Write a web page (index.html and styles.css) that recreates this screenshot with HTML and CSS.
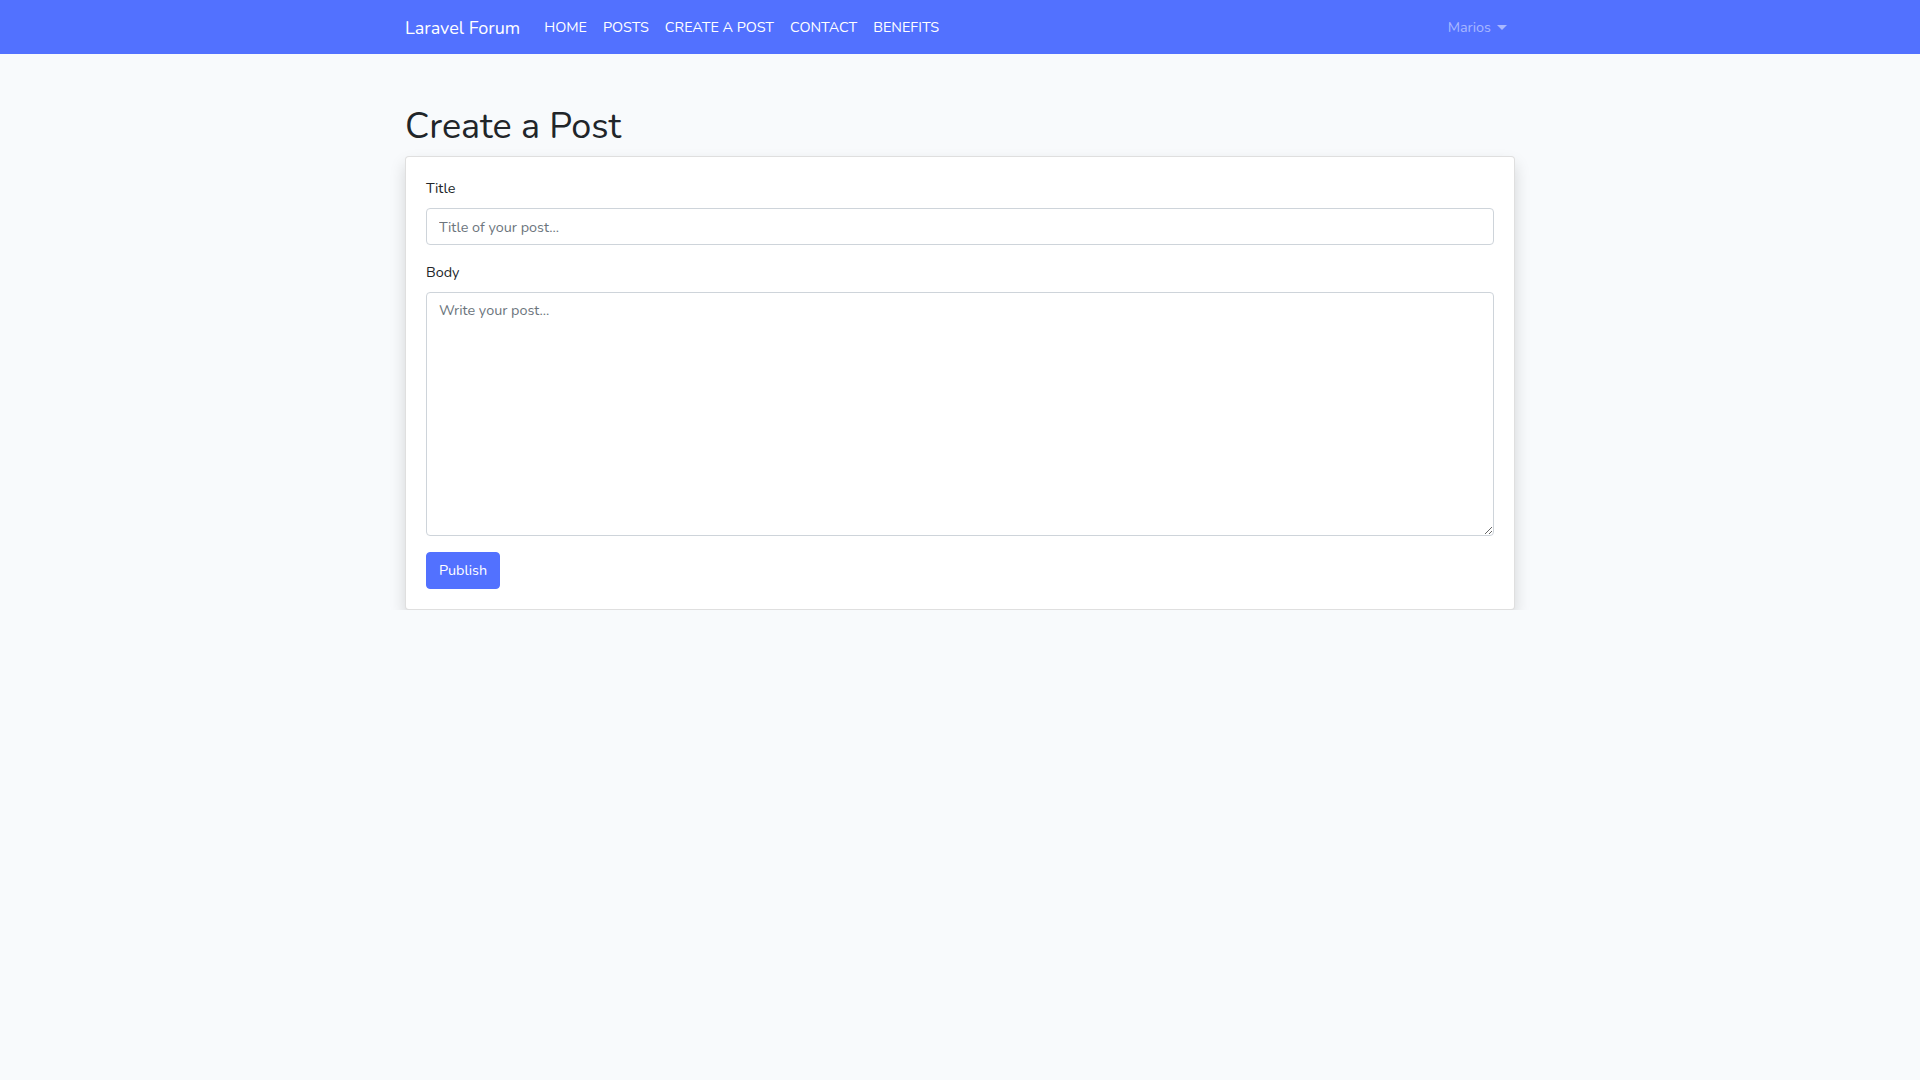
FILE: index.html
```html
<!DOCTYPE html>
<html lang="en">
<head>
<meta charset="utf-8">
<title>Laravel Forum</title>
<link rel="stylesheet" href="styles.css">
</head>
<body>
<nav class="navbar">
  <div class="nav-container">
    <a class="brand" href="#">Laravel Forum</a>
    <ul class="nav-links">
      <li><a href="#">HOME</a></li>
      <li><a href="#">POSTS</a></li>
      <li><a href="#">CREATE A POST</a></li>
      <li><a href="#">CONTACT</a></li>
      <li><a href="#">BENEFITS</a></li>
    </ul>
    <div class="user">Marios <span class="caret"></span></div>
  </div>
</nav>
<main class="main">
  <div class="container">
    <h1 class="page-title">Create a Post</h1>
    <div class="card">
      <form class="card-body">
        <div class="form-group">
          <label class="label">Title</label>
          <input class="control" type="text" placeholder="Title of your post...">
        </div>
        <div class="form-group">
          <label class="label">Body</label>
          <textarea class="control textarea" placeholder="Write your post..."></textarea>
        </div>
        <button class="btn" type="button">Publish</button>
      </form>
    </div>
  </div>
</main>
</body>
</html>
```

FILE: styles.css
```css
* { box-sizing: border-box; }
html, body { margin: 0; padding: 0; }
body {
  background: #f8fafc;
  color: #212529;
  font-family: "Nunito", "Noto Sans", sans-serif;
  font-size: 14.4px;
  line-height: 1.6;
}
a { text-decoration: none; }

.navbar {
  background: #5271ff;
  height: 54px;
  padding: 9px 0 7px;
}
.nav-container {
  width: 1110px;
  margin: 0 auto;
  height: 38px;
  display: flex;
  align-items: center;
}
.brand {
  color: #fff;
  font-size: 18px;
  margin-right: 16px;
  padding: 5px 0;
  line-height: 1.6;
}
.nav-links {
  list-style: none;
  display: flex;
  margin: 0;
  padding: 0;
}
.nav-links a {
  display: block;
  color: #fff;
  padding: 8px 8px;
}
.user {
  margin-left: auto;
  color: rgba(255,255,255,.5);
  padding: 8px 8px;
  display: flex;
  align-items: center;
}
.caret {
  display: inline-block;
  margin-left: 6px;
  width: 0; height: 0;
  border-top: 5px solid rgba(255,255,255,.5);
  border-left: 5px solid transparent;
  border-right: 5px solid transparent;
  margin-bottom: 2px;
}

.main { padding-top: 51px; }
.container { width: 1110px; margin: 0 auto; }
.page-title {
  font-size: 36px;
  font-weight: 400;
  line-height: 1.2;
  margin: 0 0 8px;
}
.card {
  background: #fff;
  border: 1px solid rgba(0,0,0,.125);
  border-radius: 4px;
  box-shadow: 0 8px 16px rgba(0,0,0,.15);
}
.card-body { padding: 20px; }
.form-group { margin-bottom: 16px; }
.label {
  display: inline-block;
  margin-bottom: 8px;
}
.control {
  display: block;
  width: 100%;
  height: 37px;
  padding: 6px 12px;
  font: inherit;
  font-size: 14.4px;
  line-height: 1.6;
  color: #495057;
  background: #fff;
  border: 1px solid #ced4da;
  border-radius: 4px;
}
.control::placeholder { color: #6c757d; }
.textarea { height: 244px; resize: vertical; }
.btn {
  font: inherit;
  font-size: 14.4px;
  line-height: 1.6;
  color: #fff;
  background: #5271ff;
  border: 1px solid #5271ff;
  border-radius: 4px;
  padding: 6px 12px;
}
```
